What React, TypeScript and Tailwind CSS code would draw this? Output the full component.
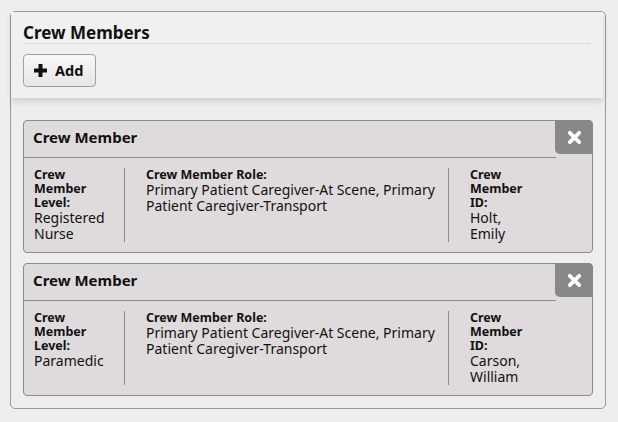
import React from "react";

type Member = { level: string; role: string; id: string };

const members: Member[] = [
  {
    level: "Registered Nurse",
    role: "Primary Patient Caregiver-At Scene, Primary Patient Caregiver-Transport",
    id: "Holt, Emily",
  },
  {
    level: "Paramedic",
    role: "Primary Patient Caregiver-At Scene, Primary Patient Caregiver-Transport",
    id: "Carson, William",
  },
];

function Card({ m }: { m: Member }) {
  return (
    <div className="relative rounded-[4px] border border-[#8c8c8c] bg-[#dfdbdc]">
      <div className="mr-[36px] h-[37px] border-b border-[#8c8c8c] pl-[9px] pt-[6px] text-[15px] font-bold leading-[20px] text-[#111]">
        Crew Member
      </div>
      <button className="absolute right-[-1px] top-[-1px] flex h-[34px] w-[38px] items-center justify-center rounded-tr-[5px] rounded-bl-[5px] bg-[#888888]">
        <svg width="15" height="15" viewBox="0 0 16 16">
          <path d="M3 3 L13 13 M13 3 L3 13" stroke="#fff" strokeWidth="4" strokeLinecap="round" />
        </svg>
      </button>
      <div className="flex pb-[10px] pt-[10px]">
        <div className="ml-[10px] w-[91px] border-r border-[#8c8c8c] pr-[12px]">
          <div className="text-[12.5px] font-bold leading-[14px]">Crew Member Level:</div>
          <div className="text-[14px] leading-[16px]">{m.level}</div>
        </div>
        <div className="w-[324px] border-r border-[#8c8c8c] pl-[21px] pr-[6px]">
          <div className="text-[12.5px] font-bold leading-[14px]">Crew Member Role:</div>
          <div className="text-[14px] leading-[16px]">{m.role}</div>
        </div>
        <div className="w-[85px] pl-[21px]">
          <div className="text-[12.5px] font-bold leading-[14px]">Crew Member ID:</div>
          <div className="text-[14px] leading-[16px]">{m.id}</div>
        </div>
      </div>
    </div>
  );
}

export default function App() {
  return (
    <div
      className="min-h-[422px] w-[618px] bg-[#eeeeee] pt-[11px] text-[#111]"
      style={{ fontFamily: '"Noto Sans", "Open Sans", sans-serif' }}
    >
      <div className="ml-[10px] w-[596px] rounded-[5px] border border-[#999999] bg-[#eeeeee] pb-[12px]">
        <div className="mr-[2px] bg-[#f0f0f0] px-[12px] pb-[11px] pt-[11px] shadow-[0_4px_6px_rgba(0,0,0,0.12)]">
          <div className="border-b border-[#dcdcdc] text-[17px] font-bold leading-[20px]">Crew Members</div>
          <button className="mt-[10px] flex h-[33px] w-[73px] items-center gap-[7px] rounded-[4px] border border-[#a0a0a0] bg-gradient-to-b from-[#f8f8f8] to-[#e6e6e6] pl-[9px] text-[14.5px] font-bold">
            <svg width="15" height="15" viewBox="0 0 15 15">
              <path d="M7.5 1 V14 M1 7.5 H14" stroke="#111" strokeWidth="4" strokeLinecap="butt" />
            </svg>
            Add
          </button>
        </div>
        <div className="mt-[22px] flex flex-col gap-[10px] px-[12px]">
          {members.map((m, i) => (
            <Card key={i} m={m} />
          ))}
        </div>
      </div>
    </div>
  );
}
